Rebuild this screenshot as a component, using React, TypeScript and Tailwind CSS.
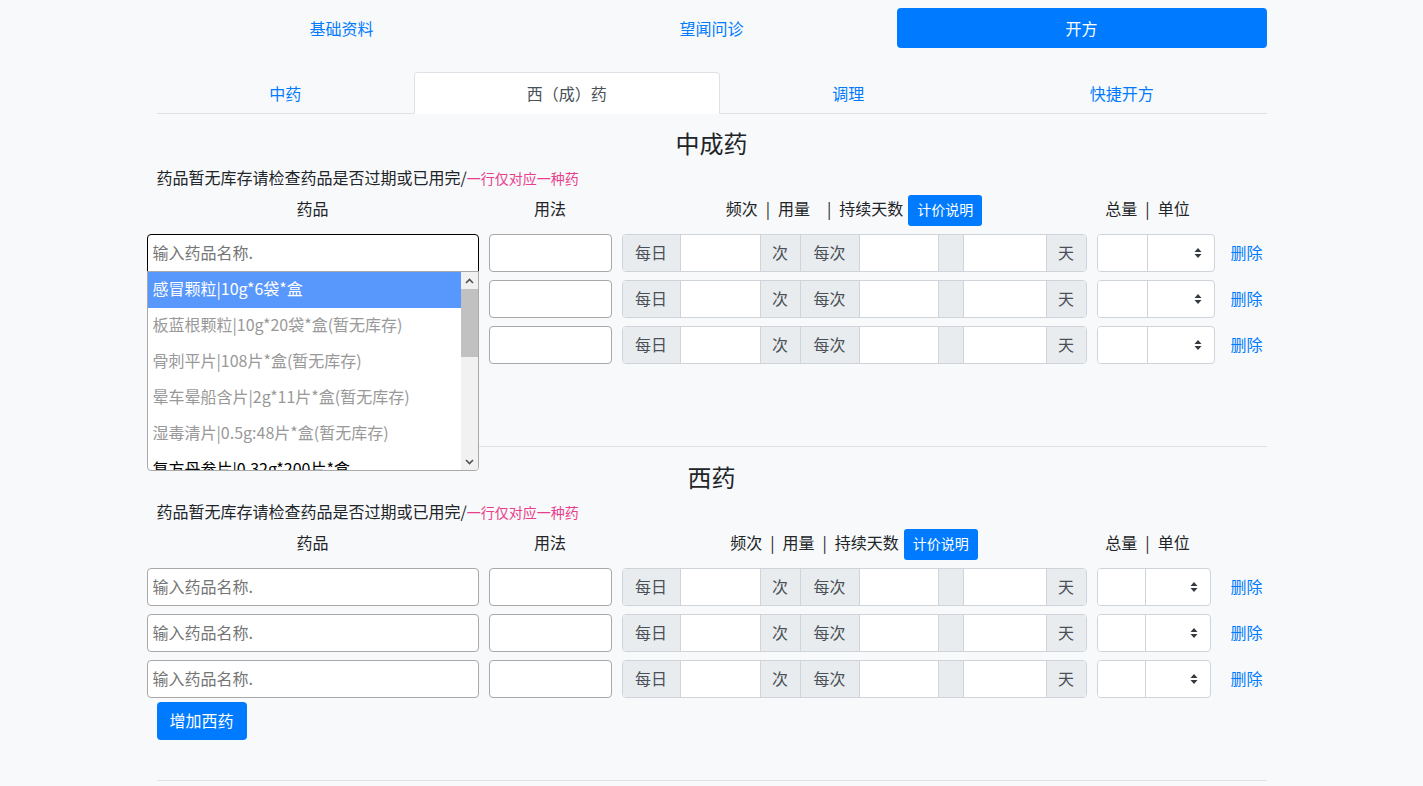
import React from "react";

const addon =
  "flex h-full shrink-0 items-center justify-center bg-[#e9ecef] pb-[2px] text-[16px] text-[#495057]";
const cell = "h-full min-w-0 shrink-0 border-l border-[#ced4da] bg-white outline-none";

const dropdownItems = [
  { label: "感冒颗粒|10g*6袋*盒", state: "active" },
  { label: "板蓝根颗粒|10g*20袋*盒(暂无库存)", state: "off" },
  { label: "骨刺平片|108片*盒(暂无库存)", state: "off" },
  { label: "晕车晕船含片|2g*11片*盒(暂无库存)", state: "off" },
  { label: "湿毒清片|0.5g:48片*盒(暂无库存)", state: "off" },
  { label: "复方丹参片|0.32g*200片*盒", state: "on" },
];

function Arrows() {
  return (
    <svg width="8" height="12" viewBox="0 0 8 12" className="absolute right-[12px] top-1/2 -translate-y-1/2">
      <path d="M4 1 L7.5 5 H0.5 Z" fill="#343a40" />
      <path d="M4 11 L7.5 7 H0.5 Z" fill="#343a40" />
    </svg>
  );
}

function Bar({ wide }: { wide?: boolean }) {
  return <span className={wide ? "ml-[17px] mr-[8px]" : "mx-[8px]"}>|</span>;
}

function FreqGroup() {
  return (
    <div className="flex h-[38px] w-[465px] shrink-0 overflow-hidden rounded-[4px] border border-[#ced4da] bg-white">
      <div className={`${addon} w-[57px]`}>每日</div>
      <input type="text" className={`${cell} w-[80px]`} />
      <div className={`${addon} w-[41px] border-x border-[#ced4da]`}>次</div>
      <div className={`${addon} w-[58px]`}>每次</div>
      <input type="text" className={`${cell} w-[79px]`} />
      <div className={`${addon} w-[26px] border-x border-[#ced4da]`} />
      <input type="text" className={`${cell} w-[82px] border-l-0`} />
      <div className={`${addon} w-[40px] border-l border-[#ced4da]`}>天</div>
    </div>
  );
}

function TotalGroup({ narrow }: { narrow?: boolean }) {
  return (
    <div
      className={`flex h-[38px] shrink-0 overflow-hidden rounded-[4px] border border-[#ced4da] bg-white ${
        narrow ? "w-[114px]" : "w-[118px]"
      }`}
    >
      <input type="text" className={`h-full min-w-0 bg-white outline-none ${narrow ? "w-[47px]" : "w-[49px]"}`} />
      <div className="relative h-full flex-1 border-l border-[#ced4da]">
        <Arrows />
      </div>
    </div>
  );
}

function Dropdown() {
  return (
    <div className="absolute left-0 top-[37px] z-10 flex h-[200px] w-[332px] overflow-hidden rounded-b-[4px] border border-[#a9a9a9] bg-white">
      <div className="min-w-0 flex-1 overflow-hidden">
        {dropdownItems.map((item) => (
          <div
            key={item.label}
            className={`h-[36px] whitespace-nowrap px-[5px] text-[16px] leading-[33px] ${
              item.state === "active"
                ? "bg-[#5897fb] text-white"
                : item.state === "off"
                ? "text-[#999999]"
                : "text-black"
            }`}
          >
            {item.label}
          </div>
        ))}
      </div>
      <div className="flex w-[17px] shrink-0 flex-col bg-[#f1f1f1]">
        <div className="flex h-[17px] items-center justify-center">
          <svg width="9" height="6" viewBox="0 0 9 6">
            <path d="M1 5 L4.5 1.5 L8 5" fill="none" stroke="#505050" strokeWidth="1.6" />
          </svg>
        </div>
        <div className="h-[68px] bg-[#c1c1c1]" />
        <div className="flex-1" />
        <div className="flex h-[17px] items-center justify-center">
          <svg width="9" height="6" viewBox="0 0 9 6">
            <path d="M1 1 L4.5 4.5 L8 1" fill="none" stroke="#505050" strokeWidth="1.6" />
          </svg>
        </div>
      </div>
    </div>
  );
}

function DrugRow({ focused, narrow }: { focused?: boolean; narrow?: boolean }) {
  return (
    <div className="-mx-[10px] flex h-[38px] items-center">
      <div className="relative h-[38px] w-[332px] shrink-0">
        <input
          type="text"
          placeholder="输入药品名称."
          className={`h-[38px] w-full border bg-white px-[5px] pb-[2px] text-[16px] outline-none placeholder:text-[#757575] ${
            focused ? "rounded-t-[4px] border-black" : "rounded-[4px] border-[#a9a9a9]"
          }`}
        />
        {focused ? <Dropdown /> : null}
      </div>
      <input
        type="text"
        className="ml-[10px] h-[38px] w-[123px] shrink-0 rounded-[4px] border border-[#a9a9a9] bg-white outline-none"
      />
      <div className="ml-[10px]">
        <FreqGroup />
      </div>
      <div className="ml-[10px]">
        <TotalGroup narrow={narrow} />
      </div>
      <a
        className={`cursor-pointer pb-[2px] text-[16px] text-[#007bff] ${narrow ? "ml-[20px]" : "ml-[16px]"}`}
      >
        删除
      </a>
    </div>
  );
}

function Section({
  title,
  addLabel,
  dropdown,
  narrow,
  topClass,
}: {
  title: string;
  addLabel: string;
  dropdown?: boolean;
  narrow?: boolean;
  topClass: string;
}) {
  return (
    <section className={topClass}>
      <h4 className="mb-2 h-[29px] text-center text-[24px] font-normal leading-[23px] text-[#212529]">{title}</h4>
      <div className="h-[24px] text-[16px] leading-[19px] text-[#212529]">
        药品暂无库存请检查药品是否过期或已用完/
        <span className="text-[14px] text-[#e83e8c]">一行仅对应一种药</span>
      </div>
      <div className="-mx-[10px] mt-[3px] mb-2 flex h-[31px] items-center text-[16px] text-[#212529]">
        <div className="w-[332px] shrink-0 pb-[5px] text-center">药品</div>
        <div className="ml-[10px] w-[123px] shrink-0 pb-[5px] text-center">用法</div>
        <div className="ml-[10px] flex w-[465px] shrink-0 items-center justify-center">
          <span className="pb-[5px]">
            频次
            <Bar />
            用量
            <Bar wide={dropdown} />
            持续天数
          </span>
          <button className="ml-[5px] h-[31px] rounded-[3px] bg-[#007bff] px-[9px] pb-[2px] text-[14px] leading-[21px] text-white">
            计价说明
          </button>
        </div>
        <div className="ml-[10px] w-[118px] shrink-0 pb-[5px] pr-[16px] text-center">
          总量
          <Bar />
          单位
        </div>
      </div>
      <div className="flex flex-col gap-2">
        <DrugRow focused={dropdown} narrow={narrow} />
        <DrugRow narrow={narrow} />
        <DrugRow narrow={narrow} />
      </div>
      <button className="mt-1 h-[38px] rounded-[4px] bg-[#007bff] px-[13px] pb-[2px] text-[16px] leading-[24px] text-white">
        {addLabel}
      </button>
      <div className="mt-10 h-px bg-[#dee2e6]" />
    </section>
  );
}

export default function App() {
  const pills = ["基础资料", "望闻问诊", "开方"];
  const tabs = ["中药", "西（成）药", "调理", "快捷开方"];
  return (
    <div className="min-h-screen bg-[#f8f9fa] font-['Noto_Sans_CJK_SC',sans-serif] text-[#212529]">
      <div className="mx-auto w-[1110px] pt-2">
        <div className="flex">
          {pills.map((p) => (
            <div
              key={p}
              className={`h-[40px] flex-1 rounded-[4px] text-center text-[16px] leading-[40px] ${
                p === "开方" ? "bg-[#007bff] text-white" : "text-[#007bff]"
              }`}
            >
              {p}
            </div>
          ))}
        </div>
        <div className="mt-6 flex border-b border-[#dee2e6]">
          {tabs.map((t) => (
            <div
              key={t}
              className={`-mb-px flex-auto rounded-t-[4px] border px-4 py-2 text-center text-[16px] leading-[24px] ${
                t === "西（成）药"
                  ? "border-[#dee2e6] border-b-white bg-white text-[#495057]"
                  : "border-transparent text-[#007bff]"
              }`}
            >
              {t}
            </div>
          ))}
        </div>
        <Section title="中成药" addLabel="增加中成药" dropdown topClass="mt-[17px]" />
        <Section title="西药" addLabel="增加西药" narrow topClass="mt-[18px]" />
      </div>
    </div>
  );
}
